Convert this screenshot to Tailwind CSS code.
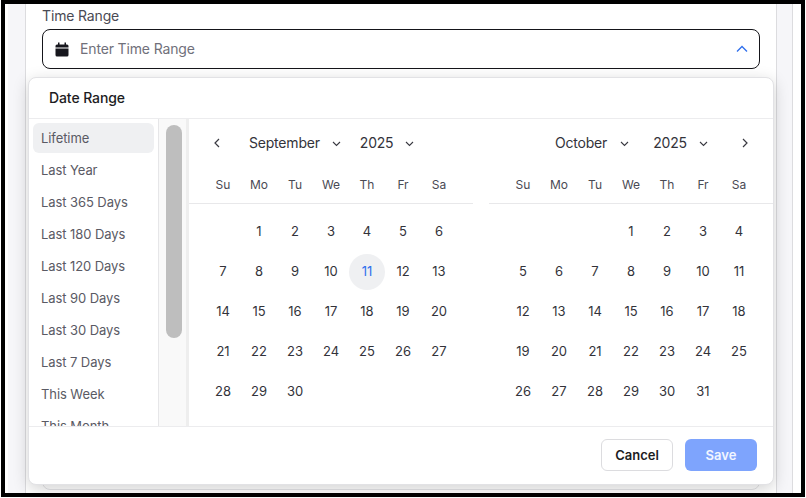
<!DOCTYPE html>
<html lang="en">
  <head>
    <meta charset="UTF-8" />
    <title>Time Range</title>
    <script src="https://cdn.jsdelivr.net/npm/@tailwindcss/browser@4"></script>
  </head>
  <body class="w-[806px] h-[498px] overflow-hidden bg-white font-['Inter',sans-serif]">
    <div class="ml-px w-[804px] h-[497px] border-4 border-black flex overflow-hidden bg-white">
      <!-- page behind the popover -->
      <div class="ml-[3px] w-[17px] bg-[#f6f6f9]"></div>
      <main class="w-[752px] border-x border-[#dcdcdf] bg-white px-4 shrink-0">
        <label class="block text-sm leading-5 tracking-[-0.15px] text-[#4a4a54] mt-[2px]">Time Range</label>
        <div class="mt-[3px] h-10 w-[718px] border border-[#15151a] rounded-lg flex items-center pl-3 pr-[11px]">
          <svg class="w-[14px] h-[15px] text-[#16161d]" viewBox="0 0 14 15" fill="currentColor">
            <path d="M3 0.500h1.500v2h5v-2H11v2h1a1.500 1.500 0 0 1 1.500 1.500V5.500H.5V4A1.500 1.500 0 0 1 2 2.500h1zM.5 6.500h13v6.500a1.500 1.500 0 0 1-1.500 1.500H2a1.500 1.500 0 0 1-1.500-1.500z" />
          </svg>
          <span class="ml-[11px] text-sm tracking-[-0.15px] text-[#70707a]">Enter Time Range</span>
          <svg class="ml-auto w-3 h-3 text-[#2f6fed]" viewBox="0 0 12 12" fill="none" stroke="currentColor" stroke-width="1.300">
            <path d="M1 8.500 6 3.500 11 8.500" />
          </svg>
        </div>
        <div class="mt-[15px] h-[406px] w-[718px] border border-[#e4e4e7] rounded-lg"></div>
      </main>
      <div class="w-4 bg-[#f6f6f9] border-r border-[#dcdcdf]"></div>
    </div>

    <!-- date range popover -->
    <div class="absolute left-[28px] top-[77px] w-[746px] h-[408px] bg-white border border-[#e2e2e5] rounded-lg shadow-[0_4px_16px_rgba(0,0,0,0.18)] flex flex-col overflow-hidden">
      <div class="h-[41px] shrink-0 border-b border-[#ececee] px-5 flex items-center text-sm font-medium tracking-[-0.1px] text-[#1c1c22]">Date Range</div>
      <div class="h-[307px] shrink-0 flex overflow-hidden">
        <ul class="w-[130px] shrink-0 border-r border-[#e6e6e8] pt-1 px-1 text-[13px] tracking-[-0.08px] text-[#5a5a64] h-[307px] overflow-hidden">
          <li class="h-[30px] mb-[2px] pl-2 pt-[2px] flex items-center rounded-md bg-[#eff0f2]">Lifetime</li>
          <li class="h-[30px] mb-[2px] pl-2 pt-[2px] flex items-center">Last Year</li>
          <li class="h-[30px] mb-[2px] pl-2 pt-[2px] flex items-center">Last 365 Days</li>
          <li class="h-[30px] mb-[2px] pl-2 pt-[2px] flex items-center">Last 180 Days</li>
          <li class="h-[30px] mb-[2px] pl-2 pt-[2px] flex items-center">Last 120 Days</li>
          <li class="h-[30px] mb-[2px] pl-2 pt-[2px] flex items-center">Last 90 Days</li>
          <li class="h-[30px] mb-[2px] pl-2 pt-[2px] flex items-center">Last 30 Days</li>
          <li class="h-[30px] mb-[2px] pl-2 pt-[2px] flex items-center">Last 7 Days</li>
          <li class="h-[30px] mb-[2px] pl-2 pt-[2px] flex items-center">This Week</li>
          <li class="h-[30px] mb-[2px] pl-2 pt-[2px] flex items-center">This Month</li>
        </ul>
        <div class="w-[30px] shrink-0 bg-[#f9f9f9] border-r-[3px] border-[#eeeeee] pt-[6px] pl-[7px]">
          <div class="w-4 h-[213px] rounded-full bg-[#bebebe]"></div>
        </div>
        <div class="flex gap-4 w-[584px] shrink-0 text-[13px] text-[#33333a]">
          <!-- September -->
          <section class="w-[284px] shrink-0">
            <div class="h-12 flex items-center pl-6 text-sm tracking-[-0.2px]">
              <svg class="w-2 h-3 text-[#3a3a42]" viewBox="0 0 8 12" fill="none" stroke="currentColor" stroke-width="1.200"><path d="M6 2 2 6l4 4" /></svg>
              <span class="ml-[28px]">September</span>
              <svg class="ml-3 w-[9px] h-[9px] text-[#3a3a42]" viewBox="0 0 9 9" fill="none" stroke="currentColor" stroke-width="1.100"><path d="M1 3l3.500 3.500L8 3" /></svg>
              <span class="ml-[19px]">2025</span>
              <svg class="ml-3 w-[9px] h-[9px] text-[#3a3a42]" viewBox="0 0 9 9" fill="none" stroke="currentColor" stroke-width="1.100"><path d="M1 3l3.500 3.500L8 3" /></svg>
            </div>
            <div class="h-[37px] px-4 grid grid-cols-7 text-center text-xs text-[#4a4a54] border-b border-[#e8e8ea] items-center">
              <span>Su</span><span>Mo</span><span>Tu</span><span>We</span><span>Th</span><span>Fr</span><span>Sa</span>
            </div>
            <div class="px-4 pt-2 grid grid-cols-7 auto-rows-[40px] text-center items-center justify-items-center">
              <span></span><span>1</span><span>2</span><span>3</span><span>4</span><span>5</span><span>6</span>
              <span>7</span><span>8</span><span>9</span><span>10</span><span class="w-9 h-9 rounded-full bg-[#eff0f2] text-[#2f6fed] flex items-center justify-center">11</span><span>12</span><span>13</span>
              <span>14</span><span>15</span><span>16</span><span>17</span><span>18</span><span>19</span><span>20</span>
              <span>21</span><span>22</span><span>23</span><span>24</span><span>25</span><span>26</span><span>27</span>
              <span>28</span><span>29</span><span>30</span>
            </div>
          </section>
          <!-- October -->
          <section class="w-[284px] shrink-0">
            <div class="h-12 flex items-center pl-[66px] text-sm tracking-[-0.2px]">
              <span>October</span>
              <svg class="ml-[13px] w-[9px] h-[9px] text-[#3a3a42]" viewBox="0 0 9 9" fill="none" stroke="currentColor" stroke-width="1.100"><path d="M1 3l3.500 3.500L8 3" /></svg>
              <span class="ml-[24px]">2025</span>
              <svg class="ml-3 w-[9px] h-[9px] text-[#3a3a42]" viewBox="0 0 9 9" fill="none" stroke="currentColor" stroke-width="1.100"><path d="M1 3l3.500 3.500L8 3" /></svg>
              <svg class="ml-[33px] w-2 h-3 text-[#3a3a42]" viewBox="0 0 8 12" fill="none" stroke="currentColor" stroke-width="1.200"><path d="M2 2l4 4-4 4" /></svg>
            </div>
            <div class="h-[37px] px-4 grid grid-cols-7 text-center text-xs text-[#4a4a54] border-b border-[#e8e8ea] items-center">
              <span>Su</span><span>Mo</span><span>Tu</span><span>We</span><span>Th</span><span>Fr</span><span>Sa</span>
            </div>
            <div class="px-4 pt-2 grid grid-cols-7 auto-rows-[40px] text-center items-center justify-items-center">
              <span></span><span></span><span></span><span>1</span><span>2</span><span>3</span><span>4</span>
              <span>5</span><span>6</span><span>7</span><span>8</span><span>9</span><span>10</span><span>11</span>
              <span>12</span><span>13</span><span>14</span><span>15</span><span>16</span><span>17</span><span>18</span>
              <span>19</span><span>20</span><span>21</span><span>22</span><span>23</span><span>24</span><span>25</span>
              <span>26</span><span>27</span><span>28</span><span>29</span><span>30</span><span>31</span>
            </div>
          </section>
        </div>
      </div>
      <div class="flex-1 border-t border-[#ececee] flex items-center justify-end gap-3 pr-4 pb-px">
        <button class="w-[72px] h-8 pt-px rounded-md border border-[#dcdcdf] bg-white text-[13px] font-semibold text-[#1c1c22]">Cancel</button>
        <button class="w-[72px] h-8 pt-px rounded-md bg-[#7ea4fd] text-[13px] font-semibold text-white/90">Save</button>
      </div>
    </div>
  </body>
</html>
